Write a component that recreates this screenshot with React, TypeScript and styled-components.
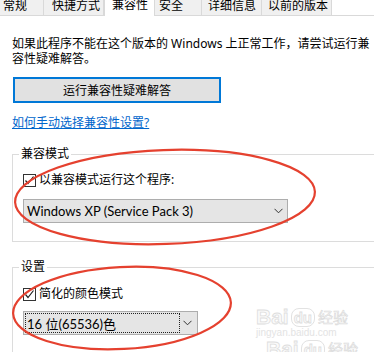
import React from "react";
import styled, { createGlobalStyle } from "styled-components";

const GlobalStyle = createGlobalStyle`
  html, body { margin: 0; padding: 0; background: #fff; }
  body {
    width: 374px; height: 352px; overflow: hidden;
    font-family: "Noto Sans", "Noto Sans CJK SC", sans-serif;
    font-size: 12px; color: #000;
  }
`;

const Page = styled.div`
  position: relative;
  width: 374px;
  height: 352px;
  overflow: hidden;
  background: #fff;
`;

const TabBar = styled.div`
  display: flex;
  height: 15px;
  border-bottom: 1px solid #d9d9d9;
`;

const Tab = styled.div<{ $w: number; $pl: number; $active?: boolean }>`
  box-sizing: border-box;
  flex: none;
  width: ${(p) => p.$w}px;
  padding-left: ${(p) => p.$pl}px;
  height: ${(p) => (p.$active ? 16 : 15)}px;
  margin-bottom: ${(p) => (p.$active ? -1 : 0)}px;
  background: ${(p) => (p.$active ? "#fff" : "#f0f0f0")};
  border-right: 1px solid #d9d9d9;
  border-left: ${(p) => (p.$active ? "1px solid #d9d9d9" : "none")};
  font-size: 12px;
  line-height: ${(p) => (p.$active ? 10 : 12)}px;
  white-space: nowrap;
  position: relative;
  z-index: ${(p) => (p.$active ? 1 : 0)};
`;

const Content = styled.div`
  display: flex;
  flex-direction: column;
  align-items: flex-start;
  padding-left: 12px;
`;

const Intro = styled.p`
  margin: 20px 0 0;
  line-height: 15px;
  white-space: nowrap;
`;

const Button = styled.div`
  box-sizing: border-box;
  margin: 11px 0 0 1px;
  width: 208px;
  height: 26px;
  border: 2px solid #0078d7;
  background: #e1e1e1;
  display: flex;
  align-items: center;
  justify-content: center;
  font-size: 12px;
`;

const Link = styled.a`
  margin-top: 12px;
  line-height: 15px;
  color: #0066cc;
  text-decoration: underline;
  cursor: pointer;
`;

const Group = styled.fieldset<{ $mt: number; $pb: number }>`
  box-sizing: border-box;
  align-self: stretch;
  min-width: 0;
  margin: ${(p) => p.$mt}px -30px 0 0;
  padding: 0 0 ${(p) => p.$pb}px 10px;
  border: 1px solid #dcdcdc;
`;

const Legend = styled.legend`
  margin-left: -4px;
  padding: 0 2px;
  font-size: 12px;
  line-height: 14px;
`;

const CheckRow = styled.div<{ $mt: number }>`
  display: flex;
  align-items: center;
  gap: 3px;
  height: 14px;
  margin-top: ${(p) => p.$mt}px;
  line-height: 14px;
`;

const Box = styled.span`
  box-sizing: border-box;
  width: 13px;
  height: 13px;
  border: 1px solid #333;
  background: #fff;
  display: flex;
  align-items: center;
  justify-content: center;
`;

const Select = styled.div<{ $w: number; $mt: number; $pl: number; $pr: number }>`
  box-sizing: border-box;
  width: ${(p) => p.$w}px;
  height: 24px;
  margin-top: ${(p) => p.$mt}px;
  background: #e5e5e5;
  border: 1px solid #adadad;
  display: flex;
  align-items: center;
  justify-content: space-between;
  padding: 0 ${(p) => p.$pr}px 0 ${(p) => p.$pl}px;
  font-family: Lato, "Noto Sans CJK SC", sans-serif;
  font-size: 13px;
`;

const SelectText = styled.span<{ $focus?: boolean }>`
  box-sizing: border-box;
  display: flex;
  align-items: center;
  height: ${(p) => (p.$focus ? "20px" : "auto")};
  width: ${(p) => (p.$focus ? "155px" : "auto")};
  padding-left: ${(p) => (p.$focus ? 1 : 0)}px;
  border: ${(p) => (p.$focus ? "1px dotted #222" : "none")};
  white-space: nowrap;
`;

const Overlay = styled.svg`
  position: absolute;
  left: 0;
  top: 0;
  pointer-events: none;
`;

const Watermark = styled.div`
  position: absolute;
  left: 256px;
  top: 306px;
  font-family: "Liberation Sans", "Noto Sans CJK SC", sans-serif;
  pointer-events: none;
  display: flex;
  flex-direction: column;
`;

const WmRow = styled.div<{ $ml?: number }>`
  display: flex;
  align-items: flex-end;
  margin-left: ${(p) => p.$ml ?? 0}px;
  font-size: 21px;
  line-height: 21px;
  font-weight: bold;
  color: #fafafa;
  -webkit-text-stroke: 0.8px #dedede;
`;

const WmDu = styled.span`
  margin: 0 2px;
  padding: 0 2px;
  font-size: 15px;
  line-height: 17px;
  border-radius: 8px;
  border: 1px solid #e2e2e2;
`;

const WmSmall = styled.div`
  font-size: 10px;
  line-height: 11px;
  color: #e3e3e3;
`;

const WmCjk = styled.span`
  font-size: 15px;
  line-height: 18px;
  font-weight: normal;
  margin-left: 1px;
  color: #fafafa;
  -webkit-text-stroke: 0.6px #dadada;
`;

const Chevron = () => (
  <svg width="9" height="6" viewBox="0 0 9 6">
    <polyline points="0.5,0.8 4.5,4.8 8.5,0.8" fill="none" stroke="#333" strokeWidth="1" />
  </svg>
);

const Check = () => (
  <svg width="11" height="11" viewBox="0 0 11 11">
    <polyline points="1.5,5.5 4,8.5 9.5,1.5" fill="none" stroke="#222" strokeWidth="1.2" />
  </svg>
);

const tabs = [
  { label: "常规", w: 44, pl: 3 },
  { label: "快捷方式", w: 60, pl: 8 },
  { label: "兼容性", w: 51, pl: 7, active: true },
  { label: "安全", w: 47, pl: 4 },
  { label: "详细信息", w: 60, pl: 6 },
  { label: "以前的版本", w: 70, pl: 6 },
];

const WatermarkRow = ({ ml }: { ml?: number }) => (
  <WmRow $ml={ml}>
    Bai<WmDu>du</WmDu>
    <WmCjk>经验</WmCjk>
  </WmRow>
);

export default function App() {
  return (
    <Page>
      <GlobalStyle />
      <TabBar>
        {tabs.map((t) => (
          <Tab key={t.label} $w={t.w} $pl={t.pl} $active={t.active}>
            {t.label}
          </Tab>
        ))}
      </TabBar>
      <Content>
        <Intro>
          如果此程序不能在这个版本的 Windows 上正常工作，请尝试运行兼
          <br />
          容性疑难解答。
        </Intro>
        <Button>运行兼容性疑难解答</Button>
        <Link>如何手动选择兼容性设置?</Link>
        <Group $mt={17} $pb={18}>
          <Legend>兼容模式</Legend>
          <CheckRow $mt={12}>
            <Box>
              <Check />
            </Box>
            <span>以兼容模式运行这个程序:</span>
          </CheckRow>
          <Select $w={265} $mt={12} $pl={3} $pr={4}>
            <SelectText>Windows XP (Service Pack 3)</SelectText>
            <Chevron />
          </Select>
        </Group>
        <Group $mt={18} $pb={30}>
          <Legend>设置</Legend>
          <CheckRow $mt={13}>
            <Box>
              <Check />
            </Box>
            <span>简化的颜色模式</span>
          </CheckRow>
          <Select $w={175} $mt={10} $pl={1} $pr={5}>
            <SelectText $focus>16 位(65536)色</SelectText>
            <Chevron />
          </Select>
        </Group>
      </Content>
      <Watermark>
        <WatermarkRow />
        <WmSmall>jingyan.baidu.com</WmSmall>
        <WatermarkRow ml={10} />
      </Watermark>
      <Overlay width="374" height="352" viewBox="0 0 374 352">
        <ellipse cx="165" cy="197" rx="150" ry="47" transform="rotate(-2 165 197)" fill="none" stroke="#e5412f" strokeWidth="2.2" />
        <ellipse cx="122" cy="308" rx="109" ry="41" transform="rotate(-3 122 308)" fill="none" stroke="#e5412f" strokeWidth="2.2" />
      </Overlay>
    </Page>
  );
}
